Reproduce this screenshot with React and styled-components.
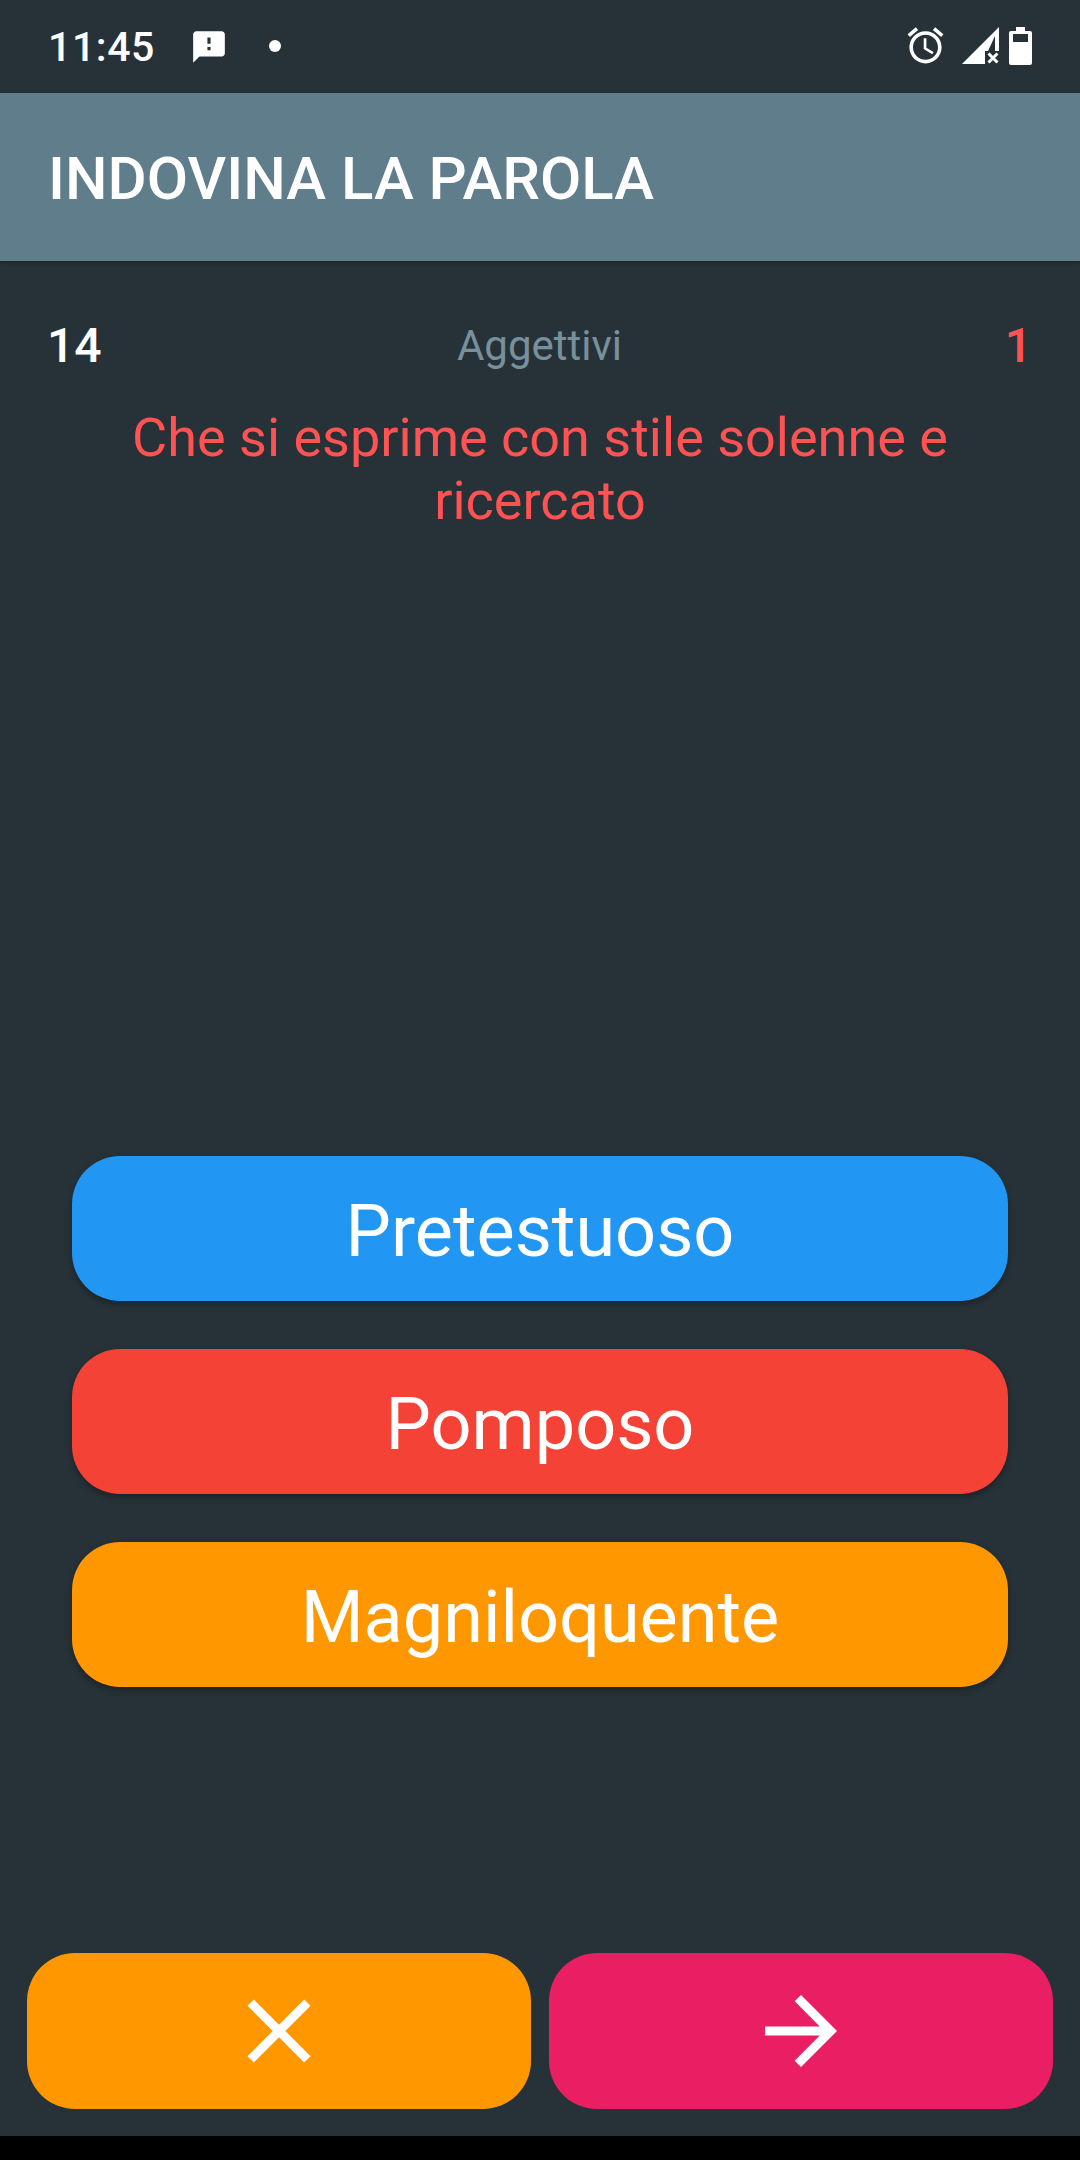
import React from 'react'
import styled, { createGlobalStyle } from 'styled-components'

const Global = createGlobalStyle`
  html, body {
    margin: 0;
    padding: 0;
    background: #000;
  }
  * {
    box-sizing: border-box;
  }
`;

const Screen = styled.div`
  width: 1080px;
  height: 2160px;
  display: flex;
  flex-direction: column;
  background-color: #000;
  font-family: Roboto, "Liberation Sans", sans-serif;
  overflow: hidden;
`;

const StatusBar = styled.div`
  height: 93px;
  flex-shrink: 0;
  background-color: #263238;
  display: flex;
  align-items: center;
  padding: 0 48px 0 48px;
  color: #fff;
`;

const Clock = styled.div`
  font-size: 41px;
  font-weight: 500;
  letter-spacing: 0.6px;
  width: 142px;
`;

const Dot = styled.div`
  width: 12px;
  height: 12px;
  border-radius: 50%;
  background: #fff;
  margin: 0 0 2px 41px;
`;

const StatusRight = styled.div`
  margin-left: auto;
  padding-bottom: 2px;
  display: flex;
  align-items: center;
`;

const AppBar = styled.div`
  height: 168px;
  flex-shrink: 0;
  background-color: #607d8b;
  display: flex;
  align-items: center;
  padding: 2px 47px 0 48px;
  color: #fff;
  font-size: 60px;
  font-weight: 500;
  box-shadow: 0 2px 4px rgba(0, 0, 0, 0.25);
  position: relative;
`;

const Body = styled.div`
  flex: 1;
  background-color: #263238;
  display: flex;
  flex-direction: column;
`;

const Header = styled.div`
  display: flex;
  align-items: center;
  justify-content: space-between;
  padding: 56px 48px 0 47px;
  height: 112px;
`;

const Score = styled.div`
  font-size: 48px;
  font-weight: 500;
  min-width: 60px;
  text-align: ${({ $right }) => ($right ? 'right' : 'left')};
  color: ${({ $color }) => $color};
`;

const Category = styled.div`
  font-size: 42px;
  color: #78909c;
`;

const Question = styled.div`
  margin-top: 33px;
  padding: 0 60px;
  font-size: 54px;
  line-height: 63px;
  text-align: center;
  color: #ff5252;
`;

const Answers = styled.div`
  margin-top: 624px;
  padding: 0 72px;
  display: flex;
  flex-direction: column;
  gap: 48px;
`;

const AnswerButton = styled.div`
  height: 145px;
  border-radius: 48px;
  background-color: ${({ $bg }) => $bg};
  display: flex;
  align-items: center;
  justify-content: center;
  padding-top: 6px;
  color: #fff;
  font-size: 72px;
  box-shadow: 0 3px 6px rgba(0, 0, 0, 0.3);
`;

const Footer = styled.div`
  margin-top: auto;
  padding: 0 27px 27px;
  display: flex;
  gap: 18px;
`;

const ActionButton = styled.div`
  flex: 1;
  height: 156px;
  border-radius: 48px;
  background-color: ${({ $bg }) => $bg};
  display: flex;
  align-items: center;
  justify-content: center;
`;

const NavBar = styled.div`
  height: 24px;
  flex-shrink: 0;
  background-color: #000;
`;

const Icon = ({ size, path }) => (
  <svg width={size} height={size} viewBox="0 0 24 24" fill="#fff">
    <path d={path} />
  </svg>
);

const FeedbackIcon = () => (
  <Icon size={38} path="M20 2H4c-1.1 0-2 .9-2 2v18l4-4h14c1.1 0 2-.9 2-2V4c0-1.1-.9-2-2-2zm-7 12h-2v-2h2v2zm0-4h-2V6h2v4z" />
);

const AlarmIcon = () => (
  <Icon size={43} path="M22 5.72l-4.6-3.86-1.29 1.53 4.6 3.86L22 5.72zM7.88 3.39L6.6 1.86 2 5.71l1.29 1.53 4.59-3.85zM12.5 8H11v6l4.75 2.85.75-1.23-4-2.37V8zM12 4c-4.97 0-9 4.03-9 9s4.03 9 9 9 9-4.03 9-9-4.03-9-9-9zm0 16c-3.87 0-7-3.13-7-7s3.13-7 7-7 7 3.13 7 7-3.13 7-7 7z" />
);

const SignalIcon = () => (
  <svg width="38" height="38" viewBox="0 0 38 38" style={{ marginLeft: 15 }}>
    <path d="M37 0v37H0z" fill="#fff" />
    <path d="M23 24h3L33 9v15h4v13H23z" fill="#263238" />
    <path d="M26.5 26.5l9 9M35.5 26.5l-9 9" stroke="#fff" strokeWidth="3" />
  </svg>
);

const BatteryIcon = () => (
  <svg width="23" height="38" viewBox="0 0 23 38" style={{ marginLeft: 9 }}>
    <path d="M7 0h9v4h5a2 2 0 0 1 2 2v30a2 2 0 0 1-2 2H2a2 2 0 0 1-2-2V6a2 2 0 0 1 2-2h5z" fill="#fff" />
    <path d="M4 7h15v8H4z" fill="#263238" />
  </svg>
);

const App = () => (
  <Screen>
    <Global />
    <StatusBar>
      <Clock>11:45</Clock>
      <FeedbackIcon />
      <Dot />
      <StatusRight>
        <AlarmIcon />
        <SignalIcon />
        <BatteryIcon />
      </StatusRight>
    </StatusBar>
    <AppBar>INDOVINA LA PAROLA</AppBar>
    <Body>
      <Header>
        <Score $color="#fff">14</Score>
        <Category>Aggettivi</Category>
        <Score $color="#ff5252" $right>1</Score>
      </Header>
      <Question>Che si esprime con stile solenne e ricercato</Question>
      <Answers>
        <AnswerButton $bg="#2196f3">Pretestuoso</AnswerButton>
        <AnswerButton $bg="#f44336">Pomposo</AnswerButton>
        <AnswerButton $bg="#ff9800">Magniloquente</AnswerButton>
      </Answers>
      <Footer>
        <ActionButton $bg="#ff9800">
          <Icon size={108} path="M19 6.41L17.59 5 12 10.59 6.41 5 5 6.41 10.59 12 5 17.59 6.41 19 12 13.41 17.59 19 19 17.59 13.41 12z" />
        </ActionButton>
        <ActionButton $bg="#e91e63">
          <Icon size={108} path="M12 4l-1.41 1.41L16.17 11H4v2h12.17l-5.58 5.59L12 20l8-8z" />
        </ActionButton>
      </Footer>
    </Body>
    <NavBar />
  </Screen>
);

export default App
